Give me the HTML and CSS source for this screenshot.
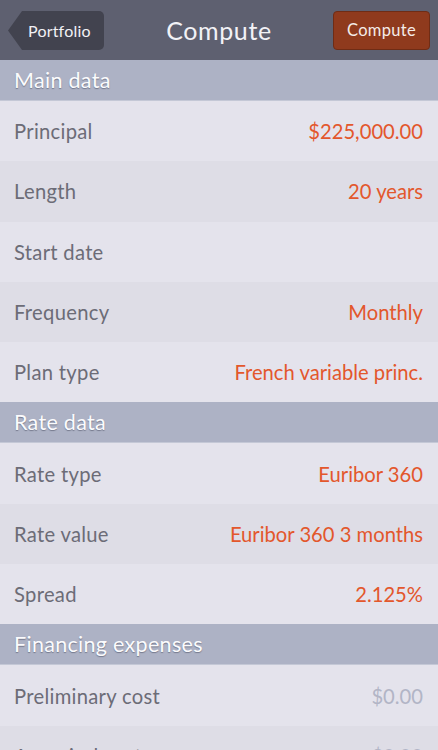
FILE: index.html
```html
<!DOCTYPE html>
<html>
<head>
<meta charset="utf-8">
<link rel="stylesheet" href="styles.css">
</head>
<body>
<div class="screen">
  <header class="navbar">
    <div class="back">
      <svg class="back-shape" width="96" height="39" viewBox="0 0 96 39"><path d="M14 0H91a5 5 0 0 1 5 5V34a5 5 0 0 1-5 5H14L0 19.5Z" fill="#42434f"/></svg>
      <span class="back-label">Portfolio</span>
    </div>
    <div class="title">Compute</div>
    <div class="action">Compute</div>
  </header>

  <div class="section">Main data</div>
  <div class="row light"><span class="label">Principal</span><span class="value">$225,000.00</span></div>
  <div class="row dark"><span class="label">Length</span><span class="value">20 years</span></div>
  <div class="row light"><span class="label">Start date</span><span class="value"></span></div>
  <div class="row dark"><span class="label">Frequency</span><span class="value">Monthly</span></div>
  <div class="row light"><span class="label">Plan type</span><span class="value">French variable princ.</span></div>

  <div class="section">Rate data</div>
  <div class="row light"><span class="label">Rate type</span><span class="value">Euribor 360</span></div>
  <div class="row dark"><span class="label">Rate value</span><span class="value">Euribor 360 3 months</span></div>
  <div class="row light"><span class="label">Spread</span><span class="value">2.125%</span></div>

  <div class="section">Financing expenses</div>
  <div class="row light"><span class="label">Preliminary cost</span><span class="value muted">$0.00</span></div>
  <div class="row dark"><span class="label">Appraisal cost</span><span class="value muted">$0.00</span></div>
</div>
</body>
</html>
```

FILE: styles.css
```css
* { box-sizing: border-box; }
html, body { margin: 0; padding: 0; }
body {
  width: 438px;
  height: 750px;
  overflow: hidden;
  background: #e4e3ec;
  font-family: Lato, "Noto Sans", sans-serif;
}
.screen { display: flex; flex-direction: column; }

.navbar {
  height: 60px;
  background: #5e6070;
  display: flex;
  align-items: center;
  justify-content: space-between;
  padding: 0 8px;
  position: relative;
}
.back {
  position: relative;
  width: 96px;
  height: 39px;
  display: flex;
  align-items: center;
}
.back-shape { position: absolute; left: 0; top: 0; }
.back-label {
  position: relative;
  color: #f1f1f5;
  font-size: 16px;
  margin-left: 20px;
  letter-spacing: 0.2px;
}
.title {
  position: absolute;
  left: 0; right: 0;
  text-align: center;
  color: #f2f2f6;
  font-size: 25px;
  letter-spacing: 0.6px;
  pointer-events: none;
}
.action {
  width: 97px;
  height: 39px;
  background: #8f3a1d;
  border: 1px solid #6f2c15;
  border-radius: 4px;
  color: #f4ece8;
  font-size: 16.5px;
  display: flex;
  align-items: center;
  justify-content: center;
  letter-spacing: 0.3px;
}

.section {
  height: 41px;
  background: #adb2c5;
  border-bottom: 1px solid #c4c8d6;
  color: #fbfbfd;
  font-size: 21.5px;
  letter-spacing: 0.3px;
  display: flex;
  align-items: center;
  padding-left: 14px;
  text-shadow: 0 1px 1px rgba(60, 64, 84, 0.5);
}

.row {
  height: 60.3px;
  display: flex;
  align-items: center;
  justify-content: space-between;
  padding: 0 15px 0 14px;
  font-size: 20.2px;
}
.row.light { background: #e4e3ec; }
.row.dark { background: #dedde6; }
.label { color: #6c6c77; letter-spacing: 0.3px; }
.value { color: #e3572c; }
.value.muted { color: #b2b5c6; }
```
